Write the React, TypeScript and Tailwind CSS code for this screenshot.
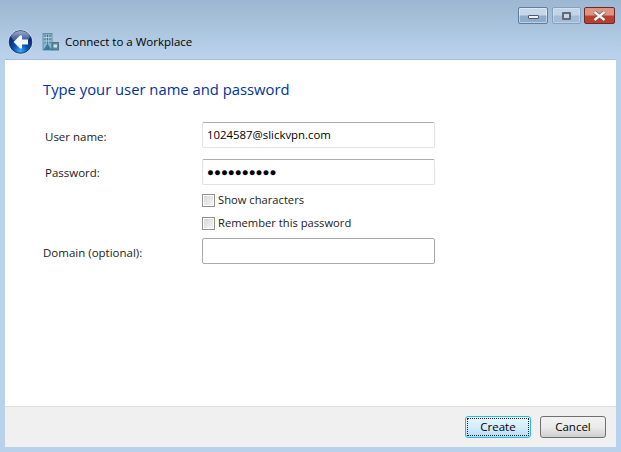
const font = "font-['Open_Sans','Noto_Sans',sans-serif]";

function BackIcon() {
  return (
    <svg width="26" height="26" viewBox="0 0 26 26">
      <defs>
        <radialGradient id="orb" cx="50%" cy="90%" r="65%">
          <stop offset="0" stopColor="#35b0f5" />
          <stop offset="0.5" stopColor="#0c4fb4" />
          <stop offset="1" stopColor="#0a2c78" />
        </radialGradient>
        <linearGradient id="shine" x1="0" y1="0" x2="0" y2="1">
          <stop offset="0" stopColor="#ffffff" stopOpacity="0.6" />
          <stop offset="1" stopColor="#ffffff" stopOpacity="0.1" />
        </linearGradient>
      </defs>
      <circle cx="12.5" cy="13" r="12.5" fill="#dbe7f3" opacity="0.6" />
      <circle cx="12.5" cy="13" r="11.3" fill="url(#orb)" stroke="#0b2a66" strokeWidth="0.8" />
      <ellipse cx="12.5" cy="7.6" rx="9.3" ry="5.6" fill="url(#shine)" />
      <path d="M12 6.5 L5.5 13 L12 19.5 L14 19.5 L14 15.4 L20 15.4 L20 10.6 L14 10.6 L14 6.5 Z" fill="#f4f7fb" />
    </svg>
  );
}

function BuildingIcon() {
  return (
    <svg width="17" height="18" viewBox="0 0 17 18">
      <rect x="1" y="0.5" width="9" height="16.5" fill="#8fb8cf" stroke="#5b8297" strokeWidth="0.8" />
      <path d="M3 1.5v9M5.5 1.5v9M8 1.5v9" stroke="#3f7391" strokeWidth="1" />
      <path d="M1.5 4.5h8M1.5 8h8" stroke="#c4e0ec" strokeWidth="0.8" />
      <path d="M1.5 17 L5.5 10.5 L9.5 17 Z" fill="#2f7f9f" />
      <rect x="10" y="9.5" width="6.5" height="7.5" fill="#5e8aa1" stroke="#40667b" strokeWidth="0.8" />
      <rect x="11.5" y="11.5" width="3.5" height="3" fill="#cfe3ec" />
    </svg>
  );
}

function WindowButtons() {
  return (
    <div className="flex justify-end pt-[7px] pr-px h-[28px] items-start">
      <div className="w-[30px] h-[17px] rounded-[2px] border border-[#5f7c9c] bg-gradient-to-b from-[#c6d7e9] from-[45%] to-[#8eacca] to-[55%] flex items-center justify-center shadow-[inset_0_0_0_1px_rgba(255,255,255,0.45)]">
        <div className="w-[11px] h-[4px] mt-[3px] bg-[#eef1f5] border border-[#4d5a6b] rounded-[1px]" />
      </div>
      <div className="w-[29px] h-[17px] ml-[4px] rounded-[2px] border border-[#87a1bd] bg-gradient-to-b from-[#c2d4e7] from-[45%] to-[#a3bdd8] to-[55%] flex items-center justify-center shadow-[inset_0_0_0_1px_rgba(255,255,255,0.3)]">
        <div className="w-[9px] h-[8px] border-2 border-[#5d6a7b] bg-[#c9d4e0] rounded-[1px]" />
      </div>
      <div className="w-[31px] h-[17px] ml-[3px] rounded-[2px] border border-[#6b2a2a] bg-gradient-to-b from-[#dd9485] from-[45%] to-[#bb3f30] to-[55%] flex items-center justify-center">
        <svg width="13" height="10" viewBox="0 0 13 10">
          <path d="M1.5 1 L11.5 9 M11.5 1 L1.5 9" stroke="#5a4a4a" strokeWidth="3.6" />
          <path d="M1.5 1 L11.5 9 M11.5 1 L1.5 9" stroke="#f2f2f2" strokeWidth="2.4" />
        </svg>
      </div>
    </div>
  );
}

function Field({ value, dots }: { value?: string; dots?: boolean }) {
  return (
    <div
      className={`w-[233px] h-[26px] rounded-[2px] border border-[#dfe3e8] border-t-[#abadb3] flex items-center px-[4px] bg-white text-black ${
        dots ? "text-[11.5px]" : "text-[11.4px]"
      }`}
    >
      {value}
    </div>
  );
}

function Check({ label }: { label: string }) {
  return (
    <div className="flex items-center h-[13px] text-[11.2px] text-[#1a1a1a]">
      <div className="w-[13px] h-[13px] border border-[#8e8f8f] bg-gradient-to-br from-[#d4d4d4] to-[#f8f8f8] shadow-[inset_0_0_0_1px_#fff]" />
      <span className="ml-[3px]">{label}</span>
    </div>
  );
}

export default function App() {
  return (
    <div className={`w-[621px] h-[452px] flex flex-col px-[5px] pb-[5px] bg-gradient-to-b from-[#9db6d1] to-[#b9d1ea] to-[12%] ${font}`}>
      <WindowButtons />
      <div className="h-[31px] flex items-center pl-[3px] pb-[4px] text-[11.5px] text-black">
        <BackIcon />
        <div className="ml-[8px]"><BuildingIcon /></div>
        <span className="ml-[6px]">Connect to a Workplace</span>
      </div>

      <div className="flex-1 flex flex-col bg-white border-t border-[#a5bcd6]">
        <div className="flex-1 pl-[38px] pt-[19px]">
          <h1 className="text-[14.8px] leading-[20px] text-[#003399]">Type your user name and password</h1>

          <div className="mt-[23px] flex flex-col">
            <div className="flex items-center h-[26px] text-[11.5px] text-[#1a1a1a]">
              <span className="w-[159px] pl-[2px] pt-[3px]">User name:</span>
              <Field value="1024587@slickvpn.com" />
            </div>
            <div className="flex items-center h-[26px] mt-[11px] text-[11.5px] text-[#1a1a1a]">
              <span className="w-[159px] pl-[2px] pt-[2px]">Password:</span>
              <Field value="●●●●●●●●●●" dots />
            </div>
            <div className="pl-[159px] mt-[9px] flex flex-col gap-[10px]">
              <Check label="Show characters" />
              <Check label="Remember this password" />
            </div>
            <div className="flex items-center h-[26px] mt-[8px] text-[11.5px] text-[#1a1a1a]">
              <span className="w-[159px] pt-[3px]">Domain (optional):</span>
              <div className="w-[233px] h-[26px] rounded-[2px] border border-[#a9a9a9] bg-white" />
            </div>
          </div>
        </div>

        <div className="h-[41px] bg-[#f0f0f0] border-t border-[#dfdfdf] flex items-start justify-end pt-[9px] pr-[10px] text-[11.5px] text-black">
          <button className="w-[66px] h-[22px] rounded-[3px] border border-[#2fb6e6] bg-gradient-to-b from-[#e6f5fd] via-[#d5eefc] to-[#b3dcf5] p-px">
            <span className="flex h-full w-full items-center justify-center border border-dotted border-[#222]">Create</span>
          </button>
          <button className="w-[66px] h-[22px] ml-[9px] rounded-[3px] border border-[#707070] bg-gradient-to-b from-[#f2f2f2] via-[#ebebeb] to-[#cfcfcf] flex items-center justify-center">
            Cancel
          </button>
        </div>
      </div>
    </div>
  );
}
